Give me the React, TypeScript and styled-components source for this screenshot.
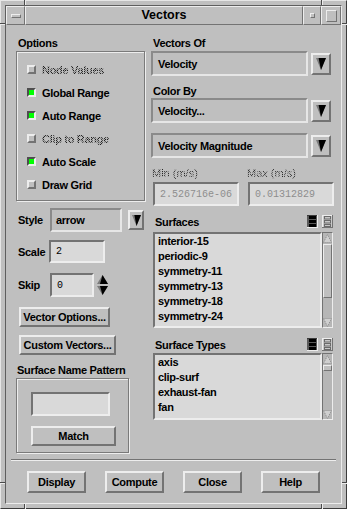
import React from 'react';
import styled, { createGlobalStyle, css } from 'styled-components';

const BG = '#bfbfbf';
const LIGHT = '#ededed';
const DARK = '#737373';
const FIELD = '#d9d9d9';
const FONT = '"Liberation Sans", Arial, Helvetica, sans-serif';
const MONO = '"Liberation Mono", "Courier New", monospace';

const GlobalStyle = createGlobalStyle`
  html, body { margin: 0; padding: 0; background: ${BG}; }
  body { font-family: ${FONT}; font-size: 11px; letter-spacing: -0.3px; font-weight: bold; color: #000; }
  *, *::before, *::after { box-sizing: border-box; }
`;

const raised = (w = 2) => css`
  border: ${w}px solid;
  border-color: ${LIGHT} ${DARK} ${DARK} ${LIGHT};
`;
const sunken = (w = 2) => css`
  border: ${w}px solid;
  border-color: ${DARK} ${LIGHT} ${LIGHT} ${DARK};
`;
const stipple = css`
  color: transparent;
  background-image: repeating-conic-gradient(#1e1e1e 0 25%, #a8a8a8 0 50%);
  background-size: 2px 2px;
  -webkit-background-clip: text;
  background-clip: text;
`;

/* ---------- window frame ---------- */
const Window = styled.div`
  position: relative;
  width: 347px;
  height: 509px;
  background: ${BG};
  border: 1px solid;
  border-color: #e6e6e6 #3c3c3c #3c3c3c #e6e6e6;
  padding: 4px;
`;
const VTick = styled.span<{ $left: number; $top: number }>`
  position: absolute;
  left: ${p => p.$left}px;
  top: ${p => p.$top}px;
  width: 2px;
  height: 5px;
  border-left: 1px solid #4a4a4a;
  border-right: 1px solid #ececec;
`;
const HTick = styled.span<{ $left: number; $top: number }>`
  position: absolute;
  left: ${p => p.$left}px;
  top: ${p => p.$top}px;
  width: 5px;
  height: 2px;
  border-top: 1px solid #4a4a4a;
  border-bottom: 1px solid #ececec;
`;
const Inner = styled.div`
  height: 100%;
  border: 1px solid;
  border-color: #5e5e5e #ececec #ececec #5e5e5e;
  display: flex;
  flex-direction: column;
`;

/* ---------- title bar ---------- */
const TitleBar = styled.div`
  display: flex;
  height: 19px;
  flex: none;
`;
const TitleSeg = styled.div<{ $w?: number }>`
  ${raised(1)};
  ${p => (p.$w ? `width: ${p.$w}px; flex: none;` : 'flex: 1;')}
  display: flex;
  align-items: center;
  justify-content: center;
`;
const TitleText = styled.span`
  font-size: 12.5px;
  letter-spacing: 0;
  font-weight: bold;
  line-height: 1;
`;
const Glyph = styled.span<{ $w: number; $h: number }>`
  display: block;
  width: ${p => p.$w}px;
  height: ${p => p.$h}px;
  ${raised(1)};
`;

/* ---------- body ---------- */
const Body = styled.div`
  flex: 1;
  padding-top: 11px;
  display: flex;
  flex-direction: column;
`;
const Columns = styled.div`
  display: grid;
  grid-template-columns: 129px 183px;
  column-gap: 6px;
  padding: 0 7px 0 10px;
`;
const Column = styled.div`
  display: flex;
  flex-direction: column;
  align-items: flex-start;
`;
const Label = styled.div<{ $mt?: number; $pl?: number; $disabled?: boolean }>`
  height: 14px;
  line-height: 14px;
  margin-top: ${p => p.$mt ?? 0}px;
  padding-left: ${p => p.$pl ?? 2}px;
  white-space: nowrap;
  ${p => p.$disabled && stipple};
`;

const GroupBox = styled.div<{ $w?: number; $h: number; $pad: string }>`
  margin-top: 1px;
  width: ${p => (p.$w ? `${p.$w}px` : '100%')};
  height: ${p => p.$h}px;
  border: 1px solid #7a7a7a;
  box-shadow: inset 1px 1px 0 ${LIGHT}, 1px 1px 0 ${LIGHT};
  padding: ${p => p.$pad};
  display: flex;
  flex-direction: column;
  align-items: flex-start;
`;
const CheckRow = styled.div`
  height: 23px;
  display: flex;
  align-items: center;
  gap: 6px;
`;
const Check = styled.span<{ $on: boolean }>`
  width: 9px;
  height: 9px;
  flex: none;
  ${p => (p.$on ? sunken(2) : raised(2))};
  background: ${p => (p.$on ? '#00ff00' : BG)};
  ${p => p.$on && `border-color: #4e4e4e ${LIGHT} ${LIGHT} #4e4e4e;`}
`;
const CheckLabel = styled.span<{ $disabled?: boolean }>`
  white-space: nowrap;
  ${p => p.$disabled && stipple};
`;

const FormRow = styled.div<{ $mt: number; $h: number }>`
  margin-top: ${p => p.$mt}px;
  height: ${p => p.$h}px;
  display: flex;
  align-items: center;
`;
const RowLabel = styled.span<{ $w: number }>`
  width: ${p => p.$w}px;
  padding-left: 2px;
  flex: none;
`;
const Combo = styled.div<{ $w: number; $h: number; $pl?: number }>`
  width: ${p => p.$w}px;
  height: ${p => p.$h}px;
  flex: none;
  ${sunken(2)};
  border-color: #8a8a8a #e6e6e6 #e6e6e6 #8a8a8a;
  background: ${BG};
  display: flex;
  align-items: center;
  padding-left: ${p => p.$pl ?? 4}px;
  white-space: nowrap;
`;
const TextField = styled.div<{ $w: number; $h: number; $pl?: number; $dim?: boolean }>`
  width: ${p => p.$w}px;
  height: ${p => p.$h}px;
  flex: none;
  ${sunken(2)};
  background: ${FIELD};
  display: flex;
  align-items: center;
  padding-left: ${p => p.$pl ?? 5}px;
  font-family: ${MONO};
  font-weight: normal;
  letter-spacing: 0;
  font-size: 10px;
  color: ${p => (p.$dim ? '#8e8e8e' : '#000')};
`;
const ArrowButton = styled.div<{ $w: number; $h: number; $ml: number }>`
  width: ${p => p.$w}px;
  height: ${p => p.$h}px;
  margin-left: ${p => p.$ml}px;
  flex: none;
  ${raised(2)};
  display: flex;
  align-items: center;
  justify-content: center;
`;
const Spinner = styled.div`
  margin-left: 3px;
  display: flex;
  flex-direction: column;
  gap: 2px;
`;
const PushButton = styled.div<{ $w: number; $h: number; $mt?: number; $ml?: number }>`
  width: ${p => p.$w}px;
  height: ${p => p.$h}px;
  margin-top: ${p => p.$mt ?? 0}px;
  margin-left: ${p => p.$ml ?? 0}px;
  flex: none;
  ${raised(2)};
  display: flex;
  align-items: center;
  justify-content: center;
  white-space: nowrap;
`;

/* right column */
const DropRow = styled.div<{ $mt: number }>`
  margin-top: ${p => p.$mt}px;
  height: 25px;
  display: flex;
  align-items: center;
  gap: 3px;
`;
const PairGrid = styled.div<{ $mt: number }>`
  margin-top: ${p => p.$mt}px;
  display: grid;
  grid-template-columns: 86px 86px;
  column-gap: 9px;
  padding-left: 2px;
`;
const PairLabel = styled.div`
  height: 14px;
  line-height: 14px;
  margin-left: -1px;
  font-weight: normal;
  letter-spacing: 0;
  white-space: nowrap;
  ${stipple};
`;
const ListHeader = styled.div<{ $mt: number }>`
  margin-top: ${p => p.$mt}px;
  height: 13px;
  width: 100%;
  display: flex;
  align-items: center;
  padding: 0 1px 0 4px;
`;
const HeaderTitle = styled.span`
  flex: 1;
`;
const IconGroup = styled.div`
  display: flex;
  gap: 4px;
`;
const ListBox = styled.div<{ $mt: number; $h: number }>`
  margin-top: ${p => p.$mt}px;
  margin-left: 2px;
  width: 180px;
  height: ${p => p.$h}px;
  display: flex;
`;
const List = styled.div`
  flex: 1;
  ${sunken(2)};
  background: ${FIELD};
  padding-left: 3px;
  overflow: hidden;
`;
const ListItem = styled.div`
  height: 15px;
  line-height: 15px;
  white-space: nowrap;
`;
const ScrollBar = styled.div`
  width: 11px;
  flex: none;
  ${sunken(1)};
  background: #b6b6b6;
  display: flex;
  flex-direction: column;
  align-items: center;
  padding-top: 1px;
`;
const Thumb = styled.div<{ $h: number; $mt: number }>`
  width: 9px;
  height: ${p => p.$h}px;
  margin-top: ${p => p.$mt}px;
  ${raised(1)};
  background: ${BG};
`;
const Spacer = styled.div`
  flex: 1;
`;

/* footer */
const Separator = styled.div`
  margin: 6px 5px 0;
  height: 2px;
  border-top: 1px solid ${DARK};
  border-bottom: 1px solid ${LIGHT};
`;
const ButtonBar = styled.div`
  margin-top: 10px;
  padding-left: 21px;
  display: flex;
  gap: 19px;
`;

/* ---------- drawings ---------- */
const DownTri = ({ w = 10, h = 12 }: { w?: number; h?: number }) => (
  <svg width={w} height={h} viewBox="0 0 10 12">
    <polygon points="0,0 10,0 5,12" fill="#7a7a7a" />
    <polygon points="2.6,0 10,0 5,12" fill="#000" />
  </svg>
);
const UpTri = () => (
  <svg width="11" height="9" viewBox="0 0 11 9">
    <polygon points="5.5,0 11,9 0,9" fill="#7a7a7a" />
    <polygon points="5.5,0 11,9 3,9" fill="#000" />
  </svg>
);
const SpinDown = () => (
  <svg width="11" height="9" viewBox="0 0 11 9">
    <polygon points="0,0 11,0 5.5,9" fill="#7a7a7a" />
    <polygon points="3,0 11,0 5.5,9" fill="#000" />
  </svg>
);
const ScrollArrow = ({ up }: { up?: boolean }) => (
  <svg width="9" height="9" viewBox="0 0 9 9">
    <polygon
      points={up ? '4.5,0.5 8.5,8.5 0.5,8.5' : '0.5,0.5 8.5,0.5 4.5,8.5'}
      fill="#cfcfcf"
      stroke="#8a8a8a"
      strokeWidth="1"
      strokeDasharray="1 1"
    />
  </svg>
);
const SelectAllIcon = () => (
  <svg width="11" height="13" viewBox="0 0 11 13">
    <rect x="0" y="0" width="11" height="13" fill="#5a5a5a" />
    <rect x="0" y="0" width="11" height="1" fill="#3a3a3a" />
    <rect x="2" y="1" width="7" height="3" fill="#000" />
    <rect x="2" y="5" width="7" height="3" fill="#000" />
    <rect x="2" y="9" width="7" height="3" fill="#000" />
    <rect x="10" y="0" width="1" height="13" fill="#ededed" />
    <rect x="0" y="12" width="11" height="1" fill="#ededed" />
  </svg>
);
const DeselectIcon = () => (
  <svg width="11" height="13" viewBox="0 0 11 13">
    <rect x="0" y="0" width="11" height="13" fill="#c8c8c8" />
    <rect x="0" y="0" width="11" height="1" fill="#ededed" />
    <rect x="0" y="0" width="1" height="13" fill="#ededed" />
    <rect x="10" y="0" width="1" height="13" fill="#737373" />
    <rect x="0" y="12" width="11" height="1" fill="#737373" />
    <rect x="2.5" y="1.5" width="6" height="2.5" fill="none" stroke="#6a6a6a" strokeWidth="1" />
    <rect x="2.5" y="5.5" width="6" height="2.5" fill="none" stroke="#6a6a6a" strokeWidth="1" />
    <rect x="2.5" y="9.5" width="6" height="2" fill="none" stroke="#6a6a6a" strokeWidth="1" />
  </svg>
);

const options = [
  { label: 'Node Values', on: false, disabled: true },
  { label: 'Global Range', on: true },
  { label: 'Auto Range', on: true },
  { label: 'Clip to Range', on: false, disabled: true },
  { label: 'Auto Scale', on: true },
  { label: 'Draw Grid', on: false },
];
const surfaces = ['interior-15', 'periodic-9', 'symmetry-11', 'symmetry-13', 'symmetry-18', 'symmetry-24'];
const surfaceTypes = ['axis', 'clip-surf', 'exhaust-fan', 'fan'];

function Scroll({ thumbH, thumbMt }: { thumbH: number; thumbMt: number }) {
  return (
    <ScrollBar>
      <ScrollArrow up />
      <Thumb $h={thumbH} $mt={thumbMt} />
      <Spacer />
      <ScrollArrow />
    </ScrollBar>
  );
}

export default function App() {
  return (
    <>
      <GlobalStyle />
      <Window>
        <VTick $left={23} $top={-1} />
        <VTick $left={320} $top={-1} />
        <VTick $left={23} $top={503} />
        <VTick $left={320} $top={503} />
        <HTick $left={-1} $top={22} />
        <HTick $left={341} $top={22} />
        <HTick $left={-1} $top={481} />
        <HTick $left={341} $top={481} />
        <Inner>
          <TitleBar>
            <TitleSeg $w={19}>
              <Glyph $w={10} $h={4} />
            </TitleSeg>
            <TitleSeg>
              <TitleText>Vectors</TitleText>
            </TitleSeg>
            <TitleSeg $w={18}>
              <Glyph $w={5} $h={5} />
            </TitleSeg>
            <TitleSeg $w={20}>
              <Glyph $w={11} $h={12} />
            </TitleSeg>
          </TitleBar>
          <Body>
            <Columns>
              <Column>
                <Label>Options</Label>
                <GroupBox $h={150} $pad="6px 0 0 10px">
                  {options.map(o => (
                    <CheckRow key={o.label}>
                      <Check $on={o.on} />
                      <CheckLabel $disabled={o.disabled}>{o.label}</CheckLabel>
                    </CheckRow>
                  ))}
                </GroupBox>
                <FormRow $mt={7} $h={24}>
                  <RowLabel $w={34}>Style</RowLabel>
                  <Combo $w={72} $h={24}>arrow</Combo>
                  <ArrowButton $w={16} $h={20} $ml={6}>
                    <DownTri w={9} h={11} />
                  </ArrowButton>
                </FormRow>
                <FormRow $mt={8} $h={23}>
                  <RowLabel $w={33}>Scale</RowLabel>
                  <TextField $w={56} $h={23}>2</TextField>
                </FormRow>
                <FormRow $mt={10} $h={24}>
                  <RowLabel $w={34}>Skip</RowLabel>
                  <TextField $w={44} $h={24}>0</TextField>
                  <Spinner>
                    <UpTri />
                    <SpinDown />
                  </Spinner>
                </FormRow>
                <PushButton $w={91} $h={20} $mt={10} $ml={3}>Vector Options...</PushButton>
                <PushButton $w={97} $h={20} $mt={8} $ml={3}>Custom Vectors...</PushButton>
                <Label $mt={8} $pl={1}>Surface Name Pattern</Label>
                <GroupBox $w={113} $h={75} $pad="13px 0 0 14px">
                  <TextField $w={79} $h={24} />
                  <PushButton $w={85} $h={20} $mt={10}>Match</PushButton>
                </GroupBox>
              </Column>
              <Column>
                <Label>Vectors Of</Label>
                <DropRow $mt={1}>
                  <Combo $w={157} $h={25} $pl={5}>Velocity</Combo>
                  <ArrowButton $w={20} $h={22} $ml={0}>
                    <DownTri />
                  </ArrowButton>
                </DropRow>
                <Label $mt={8}>Color By</Label>
                <DropRow $mt={0}>
                  <Combo $w={157} $h={25} $pl={5}>Velocity...</Combo>
                  <ArrowButton $w={20} $h={22} $ml={0}>
                    <DownTri />
                  </ArrowButton>
                </DropRow>
                <DropRow $mt={10}>
                  <Combo $w={157} $h={25} $pl={5}>Velocity Magnitude</Combo>
                  <ArrowButton $w={20} $h={22} $ml={0}>
                    <DownTri />
                  </ArrowButton>
                </DropRow>
                <PairGrid $mt={8}>
                  <PairLabel>Min (m/s)</PairLabel>
                  <PairLabel>Max (m/s)</PairLabel>
                </PairGrid>
                <PairGrid $mt={2}>
                  <TextField $w={86} $h={24} $dim $pl={5}>2.526716e-06</TextField>
                  <TextField $w={86} $h={24} $dim $pl={5}>0.01312829</TextField>
                </PairGrid>
                <ListHeader $mt={9}>
                  <HeaderTitle>Surfaces</HeaderTitle>
                  <IconGroup>
                    <SelectAllIcon />
                    <DeselectIcon />
                  </IconGroup>
                </ListHeader>
                <ListBox $mt={4} $h={96}>
                  <List>
                    {surfaces.map(s => (
                      <ListItem key={s}>{s}</ListItem>
                    ))}
                  </List>
                  <Scroll thumbH={54} thumbMt={1} />
                </ListBox>
                <ListHeader $mt={10}>
                  <HeaderTitle>Surface Types</HeaderTitle>
                  <IconGroup>
                    <SelectAllIcon />
                    <DeselectIcon />
                  </IconGroup>
                </ListHeader>
                <ListBox $mt={2} $h={67}>
                  <List>
                    {surfaceTypes.map(s => (
                      <ListItem key={s}>{s}</ListItem>
                    ))}
                  </List>
                  <Scroll thumbH={6} thumbMt={1} />
                </ListBox>
              </Column>
            </Columns>
            <Separator />
            <ButtonBar>
              <PushButton $w={59} $h={22}>Display</PushButton>
              <PushButton $w={59} $h={22}>Compute</PushButton>
              <PushButton $w={59} $h={22}>Close</PushButton>
              <PushButton $w={59} $h={22}>Help</PushButton>
            </ButtonBar>
          </Body>
        </Inner>
      </Window>
    </>
  );
}
